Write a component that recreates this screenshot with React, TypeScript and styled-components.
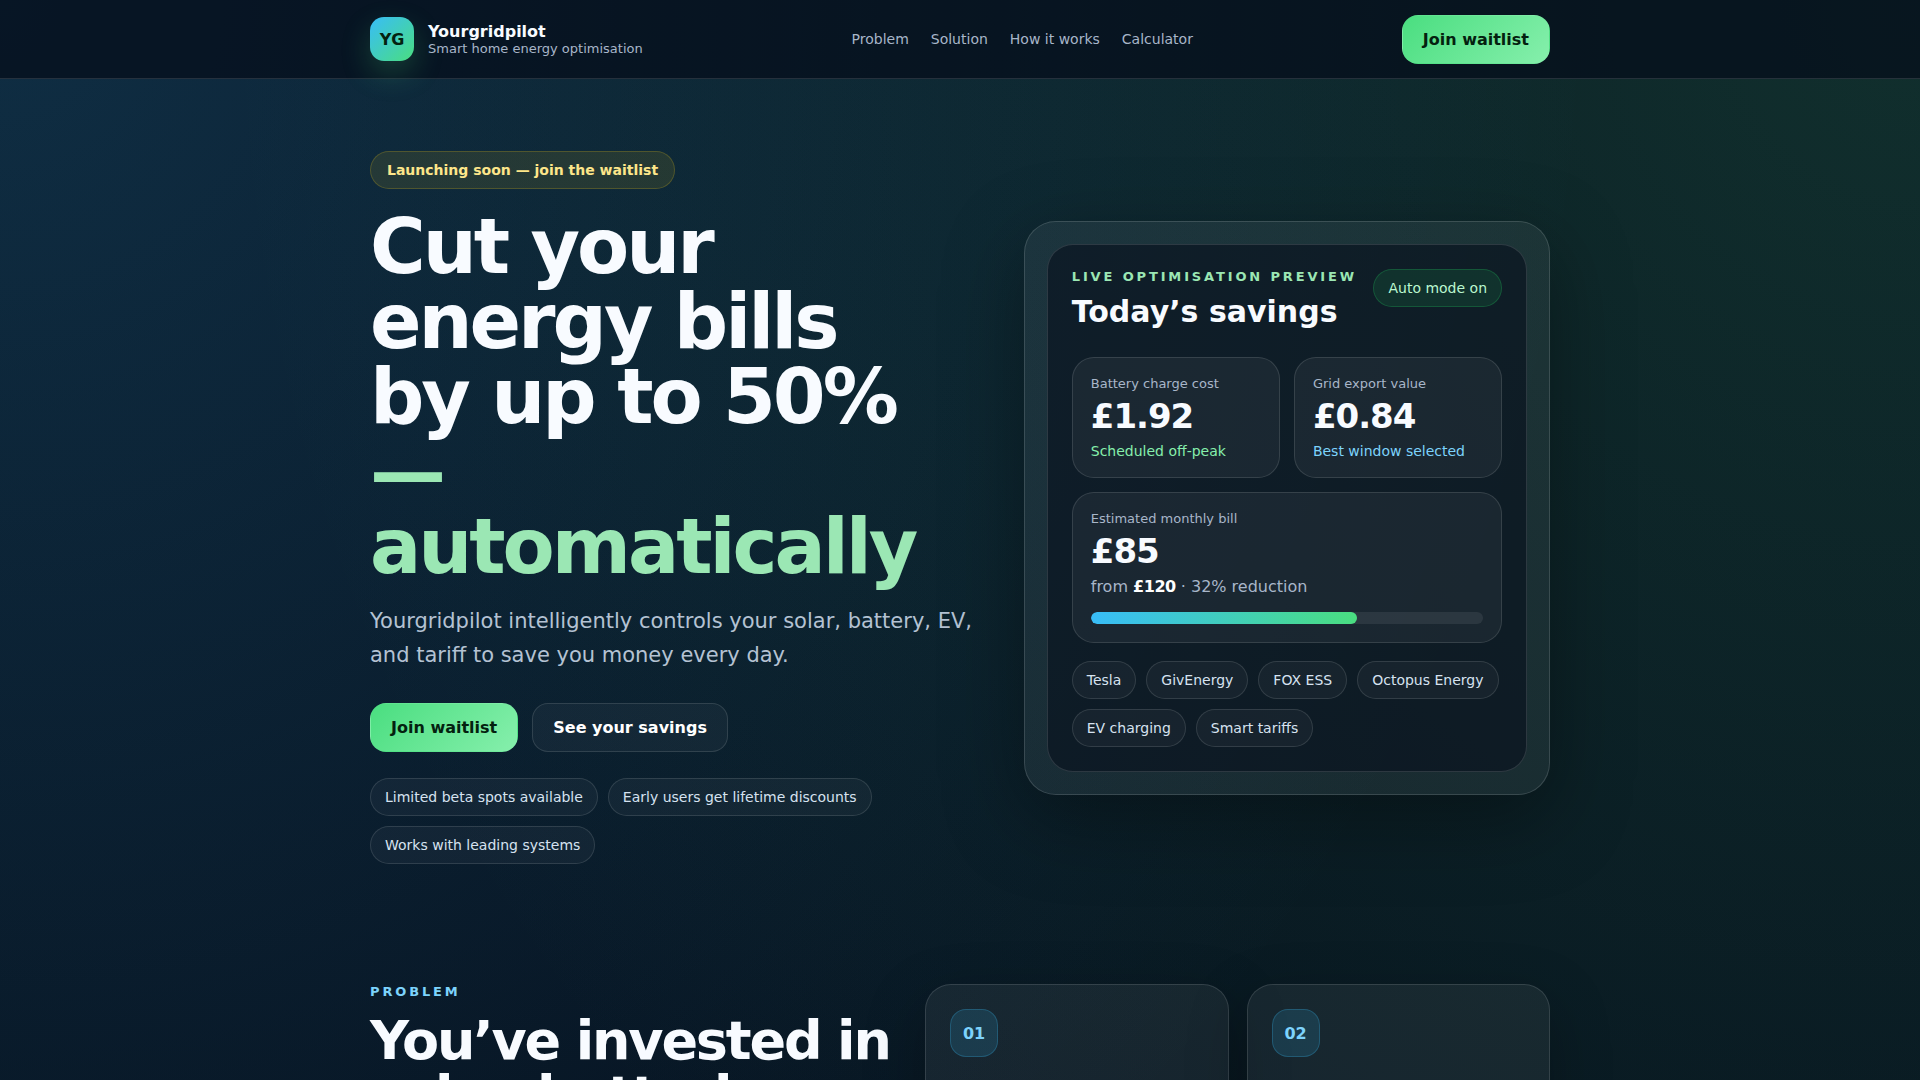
import React from "react";
import styled, { createGlobalStyle } from "styled-components";

const GlobalStyle = createGlobalStyle`
  *, *::before, *::after { box-sizing: border-box; }
  body {
    margin: 0;
    color: #f8fbff;
    font-family: "DejaVu Sans", sans-serif;
    font-size: 16px;
    background:
      radial-gradient(circle 1600px at 0 0, rgba(56, 189, 248, 0.17), transparent),
      radial-gradient(circle 1700px at 100% 0, rgba(74, 222, 128, 0.15), transparent),
      linear-gradient(180deg, #07111f 0, #06111e 1400px);
  }
  h1, h2, h3, p { margin: 0; }
`;

const Container = styled.div`
  width: 100%;
  max-width: 1220px;
  margin: 0 auto;
  padding: 0 20px;
`;

const Header = styled.header`
  position: sticky;
  top: 0;
  z-index: 10;
  background: rgba(5, 14, 27, 0.76);
  border-bottom: 1px solid rgba(255, 255, 255, 0.12);
`;

const HeaderRow = styled(Container)`
  min-height: 78px;
  display: flex;
  align-items: center;
  justify-content: space-between;
`;

const Brand = styled.a`
  display: flex;
  align-items: center;
  gap: 14px;
  color: inherit;
  text-decoration: none;
`;

const Logo = styled.span`
  width: 44px;
  height: 44px;
  display: grid;
  place-items: center;
  border-radius: 14px;
  background: linear-gradient(135deg, #38bdf8, #4ade80);
  color: #04210f;
  font-weight: 700;
  box-shadow: 0 12px 30px rgba(74, 222, 128, 0.22);
`;

const BrandText = styled.span`
  display: flex;
  flex-direction: column;
`;

const BrandName = styled.span`
  font-weight: 700;
`;

const Tagline = styled.span`
  color: #a8b6c9;
  font-size: 13px;
`;

const Nav = styled.nav`
  display: flex;
  gap: 22px;
`;

const NavLink = styled.a`
  color: #a8b6c9;
  font-size: 14px;
  text-decoration: none;
`;

const Button = styled.button<{ $primary?: boolean }>`
  padding: 14px 20px;
  border: 1px solid ${(p) => (p.$primary ? "transparent" : "rgba(255, 255, 255, 0.12)")};
  border-radius: 16px;
  background: ${(p) =>
    p.$primary ? "linear-gradient(135deg, #4ade80, #86efac)" : "rgba(255, 255, 255, 0.04)"};
  color: ${(p) => (p.$primary ? "#04210f" : "#ffffff")};
  font: 700 16px "DejaVu Sans", sans-serif;
  cursor: pointer;
`;

const Hero = styled.section`
  padding: 72px 0 60px;
`;

const HeroGrid = styled(Container)`
  display: grid;
  grid-template-columns: 1.08fr 0.92fr;
  gap: 36px;
  align-items: center;
`;

const HeroCopy = styled.div`
  display: flex;
  flex-direction: column;
  align-items: flex-start;
`;

type Tone = "plain" | "amber" | "green";

const tones: Record<Tone, { text: string; fill: string; line: string }> = {
  plain: { text: "#d6e2f0", fill: "rgba(255, 255, 255, 0.04)", line: "rgba(255, 255, 255, 0.12)" },
  amber: { text: "#fde68a", fill: "rgba(250, 204, 21, 0.1)", line: "rgba(250, 204, 21, 0.2)" },
  green: { text: "#bbf7d0", fill: "rgba(34, 197, 94, 0.13)", line: "rgba(34, 197, 94, 0.26)" },
};

const Pill = styled.span<{ $tone?: Tone; $strong?: boolean }>`
  padding: ${(p) => (p.$strong ? "10px 16px" : "10px 14px")};
  border: 1px solid ${(p) => tones[p.$tone ?? "plain"].line};
  border-radius: 999px;
  background: ${(p) => tones[p.$tone ?? "plain"].fill};
  color: ${(p) => tones[p.$tone ?? "plain"].text};
  font-size: 14px;
  line-height: 16px;
  font-weight: ${(p) => (p.$strong ? 700 : 400)};
  white-space: nowrap;
`;

const Pills = styled.div`
  display: flex;
  flex-wrap: wrap;
  gap: 10px;
`;

const Title = styled.h1`
  max-width: 580px;
  margin: 20px 0;
  font-size: 76px;
  line-height: 75px;
  letter-spacing: -0.04em;
`;

const Accent = styled.span`
  color: #9be7b4;
`;

const Lead = styled.p`
  max-width: 620px;
  color: #b4c2d3;
  font-size: 21px;
  line-height: 34px;
`;

const Actions = styled.div`
  display: flex;
  gap: 14px;
  margin: 31px 0 26px;
`;

const Frame = styled.div`
  padding: 22px;
  border: 1px solid rgba(255, 255, 255, 0.14);
  border-radius: 32px;
  background: rgba(255, 255, 255, 0.06);
  box-shadow: 0 24px 80px rgba(0, 0, 0, 0.35);
`;

const Panel = styled.div`
  padding: 24px;
  border: 1px solid rgba(255, 255, 255, 0.13);
  border-radius: 26px;
  background: rgba(8, 17, 29, 0.64);
`;

const PanelHead = styled.div`
  display: flex;
  justify-content: space-between;
  align-items: flex-start;
  margin-bottom: 28px;
`;

const Eyebrow = styled.p<{ $blue?: boolean }>`
  color: ${(p) => (p.$blue ? "#7dd3fc" : "#9be7b4")};
  font-size: 13px;
  line-height: 15px;
  font-weight: 700;
  letter-spacing: 0.22em;
  text-transform: uppercase;
`;

const PanelTitle = styled.h2`
  margin-top: 10px;
  font-size: 30px;
  line-height: 35px;
`;

const Stats = styled.div`
  display: grid;
  grid-template-columns: 1fr 1fr;
  gap: 14px;
  margin-bottom: 18px;
`;

const Stat = styled.div<{ $wide?: boolean }>`
  grid-column: ${(p) => (p.$wide ? "1 / -1" : "auto")};
  padding: 18px;
  border: 1px solid rgba(255, 255, 255, 0.12);
  border-radius: 22px;
  background: rgba(255, 255, 255, 0.05);
`;

const StatLabel = styled.p`
  color: #a8b6c9;
  font-size: 13px;
  line-height: 15px;
`;

const StatValue = styled.p`
  margin: 6px 0 8px;
  font-size: 34px;
  line-height: 38px;
  font-weight: 700;
  letter-spacing: -0.03em;
`;

const StatNote = styled.p<{ $color: string }>`
  color: ${(p) => p.$color};
  font-size: 14px;
  line-height: 16px;
`;

const BillNote = styled.p`
  margin-bottom: 16px;
  color: #a8b6c9;
  line-height: 18px;

  strong {
    color: #ffffff;
    letter-spacing: -0.03em;
  }
`;

const Track = styled.div`
  height: 12px;
  border-radius: 999px;
  background: rgba(255, 255, 255, 0.08);
  overflow: hidden;
`;

const Fill = styled.div`
  height: 100%;
  border-radius: 999px;
  background: linear-gradient(90deg, #38bdf8, #4ade80);
`;

const Problem = styled.section`
  padding: 60px 0 72px;
`;

const ProblemGrid = styled(Container)`
  display: grid;
  grid-template-columns: 0.85fr 1fr;
  gap: 24px;
  align-items: start;
`;

const SectionTitle = styled.h2`
  margin-top: 14px;
  font-size: 54px;
  line-height: 55px;
  letter-spacing: -0.04em;
`;

const Cards = styled.div`
  display: grid;
  grid-template-columns: 1fr 1fr;
  gap: 18px;
`;

const Card = styled.article`
  min-height: 240px;
  padding: 24px;
  border: 1px solid rgba(255, 255, 255, 0.12);
  border-radius: 26px;
  background: rgba(255, 255, 255, 0.06);
  box-shadow: 0 20px 60px rgba(0, 0, 0, 0.25);
`;

const Badge = styled.span`
  width: 48px;
  height: 48px;
  display: grid;
  place-items: center;
  border: 1px solid rgba(56, 189, 248, 0.24);
  border-radius: 16px;
  background: rgba(56, 189, 248, 0.14);
  color: #7dd3fc;
  font-weight: 700;
`;

const links = ["Problem", "Solution", "How it works", "Calculator"];
const perks = ["Limited beta spots available", "Early users get lifetime discounts", "Works with leading systems"];
const systems = ["Tesla", "GivEnergy", "FOX ESS", "Octopus Energy", "EV charging", "Smart tariffs"];
const reduction = 68;

export default function App() {
  return (
    <>
      <GlobalStyle />
      <Header>
        <HeaderRow>
          <Brand href="#top">
            <Logo>YG</Logo>
            <BrandText>
              <BrandName>Yourgridpilot</BrandName>
              <Tagline>Smart home energy optimisation</Tagline>
            </BrandText>
          </Brand>
          <Nav>
            {links.map((label) => (
              <NavLink key={label} href={"#" + label.toLowerCase().replace(/ /g, "-")}>
                {label}
              </NavLink>
            ))}
          </Nav>
          <Button $primary>Join waitlist</Button>
        </HeaderRow>
      </Header>
      <main id="top">
        <Hero>
          <HeroGrid>
            <HeroCopy>
              <Pill $tone="amber" $strong>
                Launching soon — join the waitlist
              </Pill>
              <Title>
                Cut your energy bills by up to 50% <Accent>— automatically</Accent>
              </Title>
              <Lead>
                Yourgridpilot intelligently controls your solar, battery, EV, and tariff to save you money every day.
              </Lead>
              <Actions>
                <Button $primary>Join waitlist</Button>
                <Button>See your savings</Button>
              </Actions>
              <Pills>
                {perks.map((perk) => (
                  <Pill key={perk}>{perk}</Pill>
                ))}
              </Pills>
            </HeroCopy>
            <Frame>
              <Panel>
                <PanelHead>
                  <div>
                    <Eyebrow>Live optimisation preview</Eyebrow>
                    <PanelTitle>Today’s savings</PanelTitle>
                  </div>
                  <Pill $tone="green">Auto mode on</Pill>
                </PanelHead>
                <Stats>
                  <Stat>
                    <StatLabel>Battery charge cost</StatLabel>
                    <StatValue>£1.92</StatValue>
                    <StatNote $color="#86efac">Scheduled off-peak</StatNote>
                  </Stat>
                  <Stat>
                    <StatLabel>Grid export value</StatLabel>
                    <StatValue>£0.84</StatValue>
                    <StatNote $color="#7dd3fc">Best window selected</StatNote>
                  </Stat>
                  <Stat $wide>
                    <StatLabel>Estimated monthly bill</StatLabel>
                    <StatValue>£85</StatValue>
                    <BillNote>
                      from <strong>£120</strong> · 32% reduction
                    </BillNote>
                    <Track>
                      <Fill style={{ width: `${reduction}%` }} />
                    </Track>
                  </Stat>
                </Stats>
                <Pills>
                  {systems.map((name) => (
                    <Pill key={name}>{name}</Pill>
                  ))}
                </Pills>
              </Panel>
            </Frame>
          </HeroGrid>
        </Hero>
        <Problem id="problem">
          <ProblemGrid>
            <div>
              <Eyebrow $blue>Problem</Eyebrow>
              <SectionTitle>You’ve invested in solar, batteries</SectionTitle>
            </div>
            <Cards>
              <Card>
                <Badge>01</Badge>
              </Card>
              <Card>
                <Badge>02</Badge>
              </Card>
            </Cards>
          </ProblemGrid>
        </Problem>
      </main>
    </>
  );
}
